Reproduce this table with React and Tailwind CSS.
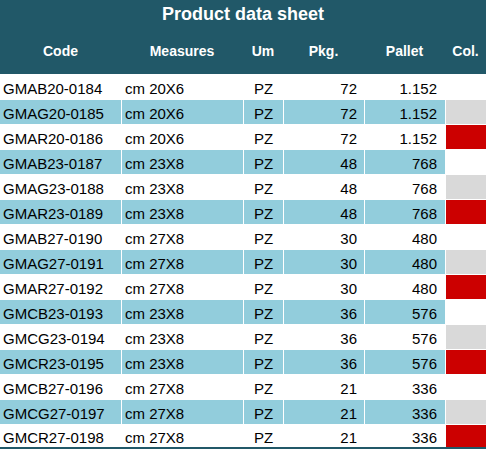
const rows = [
  ['GMAB20-0184', 'cm 20X6', 'PZ', '72', '1.152', 'B'],
  ['GMAG20-0185', 'cm 20X6', 'PZ', '72', '1.152', 'G'],
  ['GMAR20-0186', 'cm 20X6', 'PZ', '72', '1.152', 'R'],
  ['GMAB23-0187', 'cm 23X8', 'PZ', '48', '768', 'B'],
  ['GMAG23-0188', 'cm 23X8', 'PZ', '48', '768', 'G'],
  ['GMAR23-0189', 'cm 23X8', 'PZ', '48', '768', 'R'],
  ['GMAB27-0190', 'cm 27X8', 'PZ', '30', '480', 'B'],
  ['GMAG27-0191', 'cm 27X8', 'PZ', '30', '480', 'G'],
  ['GMAR27-0192', 'cm 27X8', 'PZ', '30', '480', 'R'],
  ['GMCB23-0193', 'cm 23X8', 'PZ', '36', '576', 'B'],
  ['GMCG23-0194', 'cm 23X8', 'PZ', '36', '576', 'G'],
  ['GMCR23-0195', 'cm 23X8', 'PZ', '36', '576', 'R'],
  ['GMCB27-0196', 'cm 27X8', 'PZ', '21', '336', 'B'],
  ['GMCG27-0197', 'cm 27X8', 'PZ', '21', '336', 'G'],
  ['GMCR27-0198', 'cm 27X8', 'PZ', '21', '336', 'R'],
];

const swatch = {
  B: 'bg-white',
  G: 'bg-[#d9d9d9]',
  R: 'bg-[#cc0000]',
};

const cols = 'grid grid-cols-[121px_122px_40px_81px_81px_41px]';

export default function App() {
  return (
    <div className="w-[486px] h-[449px] overflow-hidden bg-white font-['Liberation_Sans',Arial,sans-serif] text-black">
      {/* Header */}
      <div className="bg-[#215868] text-white font-bold h-[74px]">
        <div className="h-[28px] flex items-center justify-center text-[18px]">
          Product data sheet
        </div>
        <div className={`${cols} h-[46px] items-center text-center text-[14px]`}>
          <div>Code</div>
          <div>Measures</div>
          <div>Um</div>
          <div>Pkg.</div>
          <div>Pallet</div>
          <div>Col.</div>
        </div>
      </div>

      {/* Rows */}
      <div className="border-b-2 border-[#215868]">
        {rows.map((r, i) => {
          const stripe = i % 2 === 1 ? 'bg-[#92cddc]' : 'bg-white';
          const last = i === rows.length - 1;
          return (
            <div
              key={r[0]}
              className={`${cols} ${last ? 'h-[23px]' : 'h-[25px]'} text-[15px] leading-none ${i > 0 ? 'border-t border-white' : ''}`}
            >
              <div className={`${stripe} flex items-center pl-[3px] pt-[3px]`}>{r[0]}</div>
              <div className={`${stripe} border-l border-white flex items-center pl-[3px] pt-[3px]`}>{r[1]}</div>
              <div className={`${stripe} border-l border-white flex items-center justify-center pt-[3px]`}>{r[2]}</div>
              <div className={`${stripe} border-l border-white flex items-center justify-end pr-[7px] pt-[3px]`}>{r[3]}</div>
              <div className={`${stripe} border-l border-white flex items-center justify-end pr-[8px] pt-[3px]`}>{r[4]}</div>
              <div className={`${swatch[r[5]]} border-l border-white`} />
            </div>
          );
        })}
      </div>
    </div>
  );
}
